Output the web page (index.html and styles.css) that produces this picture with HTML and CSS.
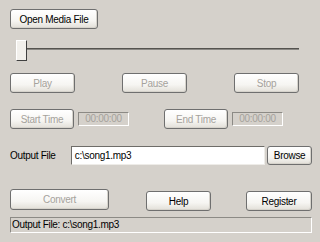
FILE: index.html
```html
<!DOCTYPE html>
<html>
  <head>
    <meta charset="UTF-8" />
    <title>Media Converter</title>
    <link rel="stylesheet" href="styles.css">
  </head>
  <body>
    <div class="app">
      <div class="row row-open">
        <button class="btn btn-open">Open Media File</button>
      </div>

      <div class="slider">
        <div class="thumb"></div>
        <div class="track"></div>
      </div>

      <div class="row row-play">
        <button class="btn btn-play off">Play</button>
        <button class="btn btn-play off">Pause</button>
        <button class="btn btn-play off">Stop</button>
      </div>

      <div class="row row-time">
        <button class="btn btn-time off">Start Time</button>
        <div class="time">00:00:00</div>
        <button class="btn btn-time btn-end off">End Time</button>
        <div class="time">00:00:00</div>
      </div>

      <div class="row row-out">
        <span class="label">Output File</span>
        <div class="input">c:\song1.mp3</div>
        <button class="btn btn-browse">Browse</button>
      </div>

      <div class="row row-bottom">
        <button class="btn btn-convert off">Convert</button>
        <button class="btn btn-help">Help</button>
        <button class="btn btn-help btn-reg">Register</button>
      </div>

      <div class="status">Output File: c:\song1.mp3</div>
    </div>
  </body>
</html>
```

FILE: styles.css
```css
html, body {
  margin: 0;
  height: 100%;
  background-color: #d5d1cb;
  font-family: 'Liberation Sans', Arial, sans-serif;
  font-size: 10px;
  letter-spacing: -0.3px;
  color: #000;
  overflow: hidden;
}

.app {
  padding: 9px 0 0 10px;
  width: 302px;
}

.row {
  display: flex;
  align-items: center;
}

.btn {
  font-family: inherit;
  font-size: 10px;
  letter-spacing: -0.3px;
  color: #000;
  height: 20px;
  padding: 0;
  border: 1px solid #6f6f6f;
  border-radius: 3px;
  background: linear-gradient(#ffffff 0%, #f6f5f2 60%, #e2dfd8 100%);
  box-shadow: inset -1px -1px 0 #d6d3cc;
}

.btn.off {
  color: #a5a29c;
}

.btn-open {
  width: 88px;
}

.slider {
  position: relative;
  height: 21px;
  margin-top: 11px;
}

.thumb {
  position: absolute;
  left: 6px;
  top: 0;
  width: 9px;
  height: 19px;
  background: #f2f0ec;
  border-top: 1px solid #fff;
  border-left: 1px solid #fff;
  border-right: 1px solid #404040;
  border-bottom: 1px solid #404040;
  z-index: 1;
}

.track {
  position: absolute;
  left: 16px;
  right: 13px;
  top: 8px;
  height: 1px;
  background: #55534f;
  border-bottom: 1px solid #8a8884;
}

.row-play {
  margin-top: 12px;
  width: 289px;
  justify-content: space-between;
}

.btn-play {
  width: 65px;
}

.row-time {
  margin-top: 16px;
}

.btn-time {
  width: 64px;
}

.btn-end {
  margin-left: 35px;
}

.time {
  margin-left: 4px;
  width: 49px;
  height: 12px;
  line-height: 12px;
  text-align: center;
  color: #a5a29c;
  border-top: 1px solid #8c8a85;
  border-left: 1px solid #8c8a85;
  border-right: 1px solid #fff;
  border-bottom: 1px solid #fff;
}

.row-out {
  margin-top: 17px;
}

.label {
  width: 61px;
}

.input {
  width: 190px;
  height: 17px;
  line-height: 17px;
  padding-left: 3px;
  background: #fff;
  border-top: 1px solid #6e6c68;
  border-left: 1px solid #6e6c68;
  border-right: 1px solid #eeece8;
  border-bottom: 1px solid #eeece8;
}

.btn-browse {
  margin-left: 2px;
  width: 45px;
  height: 19px;
}

.row-bottom {
  margin-top: 24px;
  align-items: flex-start;
}

.btn-convert {
  width: 99px;
  height: 21px;
}

.btn-help {
  width: 65px;
  margin-top: 2px;
  margin-left: 37px;
}

.btn-reg {
  margin-left: 35px;
  width: 66px;
}

.status {
  margin-top: 6px;
  width: 299px;
  height: 14px;
  line-height: 14px;
  padding-left: 1px;
  border-top: 1px solid #8c8a85;
  border-left: 1px solid #8c8a85;
  border-right: 1px solid #fff;
  border-bottom: 1px solid #fff;
}
```
